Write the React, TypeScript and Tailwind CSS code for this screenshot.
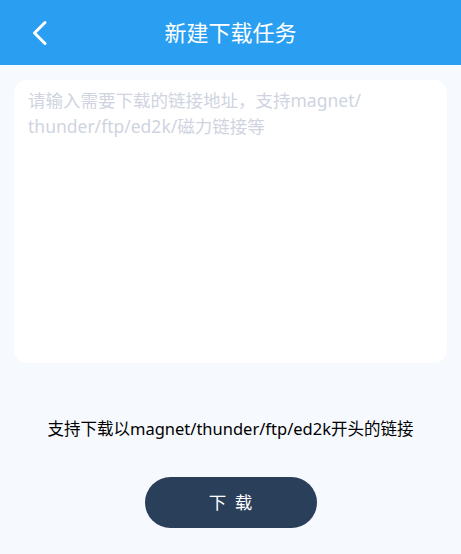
import React from 'react';

const App: React.FC = () => {
  return (
    <div
      className="w-[461px] h-[554px] bg-[#f6f9fe] flex flex-col"
      style={{ fontFamily: '"Noto Sans", "Noto Sans CJK SC", sans-serif' }}
    >
      {/* Header */}
      <div className="h-[65px] bg-[#2a9ff2] flex items-center relative shrink-0">
        <button className="absolute left-[30px] top-[19px] w-[20px] h-[28px] flex items-center justify-center text-white">
          <svg viewBox="0 0 20 28" className="w-[20px] h-[28px]" fill="none" stroke="currentColor" strokeWidth="3" strokeLinecap="round" strokeLinejoin="round">
            <path d="M15 3.5 L4.5 14 L15 24.5" />
          </svg>
        </button>
        <h1 className="flex-1 text-center text-white text-[22px] leading-none pb-[1px]">新建下载任务</h1>
      </div>

      {/* Input */}
      <div className="px-[14px] pt-[15px]">
        <textarea
          className="w-full h-[283px] bg-white rounded-[13px] px-[14px] pt-[7px] text-[17.5px] leading-[26px] text-gray-700 placeholder:text-[#cfd4e0] outline-none resize-none"
          placeholder={'请输入需要下载的链接地址，支持magnet/\nthunder/ftp/ed2k/磁力链接等'}
        />
      </div>

      <p className="mt-[52px] text-center text-[16.5px] text-black leading-none">
        支持下载以magnet/thunder/ftp/ed2k开头的链接
      </p>

      <div className="flex justify-center mt-[39px]">
        <button className="w-[172px] h-[51px] rounded-full bg-[#2a405a] text-white text-[17.5px] tracking-[2px] pl-[2px]">
          下 载
        </button>
      </div>
    </div>
  );
};

export default App;
